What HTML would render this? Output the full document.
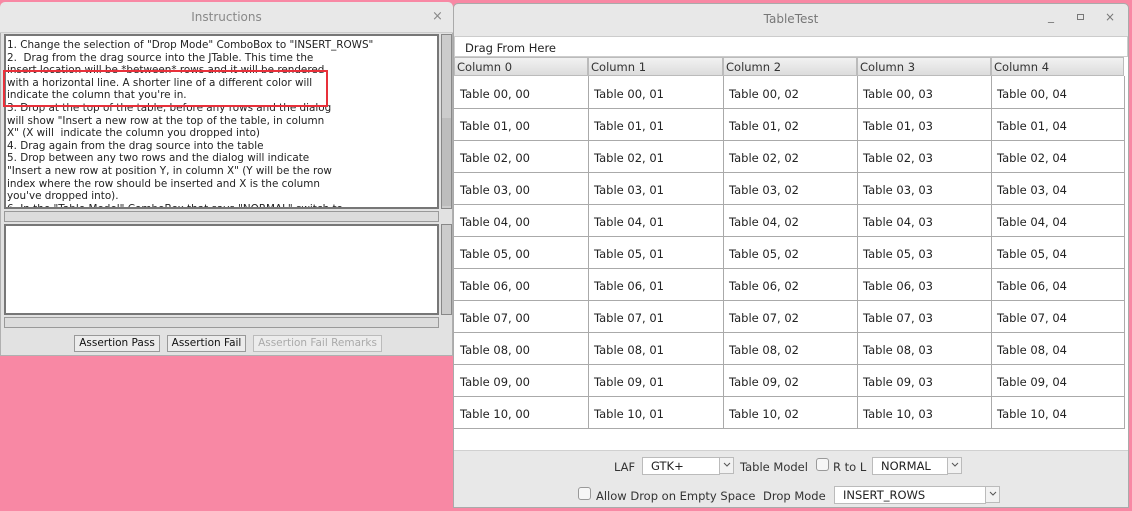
<!DOCTYPE html>
<html><head><meta charset="utf-8"><style>
*{margin:0;padding:0;box-sizing:border-box}
body{width:1132px;height:511px;background:#f888a4;position:relative;overflow:hidden;font-family:"DejaVu Sans","Liberation Sans",sans-serif}
.a{position:absolute}
.ta{font-size:10.4px;color:#222;line-height:12.6px;white-space:pre}
.btn{position:absolute;height:17px;border:1px solid #999;background:#ececec;font-size:10.5px;line-height:15px;text-align:center;color:#111}
.hs{position:absolute;height:11px;background:#dcdcdc;border:1px solid #999}
.cell{position:absolute;font-size:11.5px;color:#222}
.hd{position:absolute;top:57px;height:19px;background:linear-gradient(#f2f2f2,#dcdcdc);border:1px solid #bbb;font-size:11.5px;color:#333;line-height:18px;padding-left:2px}
.combo{position:absolute;background:#fff;border:1px solid #bbb;font-size:11.5px;color:#222;line-height:16px;padding-left:8px;height:18px}
.arr{position:absolute;width:15px;height:17px;border:1px solid #bbb;background:#f2f2f2}
.arr svg{position:absolute;left:3px;top:4px}
.cb{position:absolute;width:13px;height:13px;border:1px solid #999;border-radius:3px;background:#f6f6f6}
.lb{position:absolute;font-size:11.5px;color:#333}
</style></head><body>
<div class="a" style="left:0;top:2px;width:453px;height:354px;background:#e2e2e2;border:1px solid #b0b0b0;border-radius:5px 5px 0 0"></div>
<div class="a" style="left:0;top:2px;width:453px;height:31px;background:#e8e8e8;border-radius:5px 5px 0 0;border-bottom:1px solid #ccc"></div>
<div class="a" style="left:0;top:10px;width:453px;text-align:center;font-size:12px;color:#888">Instructions</div>
<div class="a" style="left:432px;top:9px;font-size:13px;color:#888">×</div>
<div class="a" style="left:4px;top:34px;width:435px;height:175px;background:#fff;border:2px solid #777;overflow:hidden">
<div class="ta" style="margin:3px 0 0 1px">1. Change the selection of "Drop Mode" ComboBox to "INSERT_ROWS"
2.  Drag from the drag source into the JTable. This time the
insert location will be *between* rows and it will be rendered
with a horizontal line. A shorter line of a different color will
indicate the column that you're in.
3. Drop at the top of the table, before any rows and the dialog
will show "Insert a new row at the top of the table, in column
X" (X will  indicate the column you dropped into)
4. Drag again from the drag source into the table
5. Drop between any two rows and the dialog will indicate
"Insert a new row at position Y, in column X" (Y will be the row
index where the row should be inserted and X is the column
you've dropped into).
6. In the "Table Model" ComboBox that says "NORMAL" switch to</div></div>
<div class="a" style="left:3px;top:70px;width:325px;height:37px;border:2px solid #e8303a"></div>
<div class="a" style="left:441px;top:34px;width:11px;height:175px;background:#ccc;border:1px solid #888"></div>
<div class="a" style="left:442px;top:118px;width:9px;height:88px;background:#bdbdbd"></div>
<div class="hs" style="left:4px;top:211px;width:435px"></div>
<div class="a" style="left:4px;top:224px;width:435px;height:91px;background:#fff;border:2px solid #777"></div>
<div class="a" style="left:441px;top:224px;width:11px;height:91px;background:#ccc;border:1px solid #888"></div>
<div class="hs" style="left:4px;top:317px;width:435px"></div>
<div class="btn" style="left:74px;top:335px;width:86px">Assertion Pass</div>
<div class="btn" style="left:167px;top:335px;width:79px">Assertion Fail</div>
<div class="btn" style="left:253px;top:335px;width:129px;color:#aaa;border-color:#bbb">Assertion Fail Remarks</div>

<div class="a" style="left:453px;top:3px;width:676px;height:505px;background:#e8e8e8;border:1px solid #aaa;border-radius:5px 5px 0 0"></div>
<div class="a" style="left:454px;top:12px;width:674px;text-align:center;font-size:12px;color:#777">TableTest</div>
<div class="a" style="left:1048px;top:9px;font-size:12px;color:#777">_</div>
<div class="a" style="left:1077px;top:14px;width:7px;height:6px;border:1px solid #777"></div>
<div class="a" style="left:1105px;top:10px;font-size:12px;color:#777">×</div>
<div class="a" style="left:454px;top:36px;width:674px;height:414px;background:#fff"></div>
<div class="a" style="left:454px;top:36px;width:674px;height:21px;border:1px solid #ccc;font-size:11.5px;color:#222;padding:4px 0 0 10px">Drag From Here</div>
<div class="hd" style="left:454px;width:134px">Column 0</div>
<div class="hd" style="left:588px;width:135px">Column 1</div>
<div class="hd" style="left:723px;width:134px">Column 2</div>
<div class="hd" style="left:857px;width:134px">Column 3</div>
<div class="hd" style="left:991px;width:133px">Column 4</div>
<svg class="a" style="left:0;top:0" width="1132" height="511">
<g stroke="#aaa" stroke-width="1">
<line x1="588.5" y1="76" x2="588.5" y2="429"/><line x1="723.5" y1="76" x2="723.5" y2="429"/><line x1="857.5" y1="76" x2="857.5" y2="429"/><line x1="991.5" y1="76" x2="991.5" y2="429"/><line x1="1124.5" y1="76" x2="1124.5" y2="429"/>
<line x1="454" y1="108.5" x2="1125" y2="108.5"/><line x1="454" y1="140.5" x2="1125" y2="140.5"/><line x1="454" y1="172.5" x2="1125" y2="172.5"/><line x1="454" y1="204.5" x2="1125" y2="204.5"/><line x1="454" y1="236.5" x2="1125" y2="236.5"/><line x1="454" y1="268.5" x2="1125" y2="268.5"/><line x1="454" y1="300.5" x2="1125" y2="300.5"/><line x1="454" y1="332.5" x2="1125" y2="332.5"/><line x1="454" y1="364.5" x2="1125" y2="364.5"/><line x1="454" y1="396.5" x2="1125" y2="396.5"/><line x1="454" y1="428.5" x2="1125" y2="428.5"/>
</g></svg>
<div id="cells"></div>
<script>
var xs=[460,594,729,863,997],h='';
for(var r=0;r<11;r++)for(var c=0;c<5;c++){var rr=(r<10?'0':'')+r;h+='<div class="cell" style="left:'+xs[c]+'px;top:'+(87+r*32)+'px">Table '+rr+', 0'+c+'</div>';}
document.getElementById('cells').innerHTML=h;
</script>
<div class="a" style="left:454px;top:450px;width:674px;height:57px;background:#e8e8e8;border-top:1px solid #d0d0d0"></div>
<div class="lb" style="left:614px;top:460px">LAF</div>
<div class="combo" style="left:642px;top:457px;width:78px">GTK+</div>
<div class="arr" style="left:719px;top:457px"><svg width="8" height="6"><path d="M1 1L4 4L7 1" stroke="#555" fill="none"/></svg></div>
<div class="lb" style="left:740px;top:460px">Table Model</div>
<div class="cb" style="left:816px;top:458px"></div>
<div class="lb" style="left:833px;top:460px">R to L</div>
<div class="combo" style="left:872px;top:457px;width:76px">NORMAL</div>
<div class="arr" style="left:947px;top:457px"><svg width="8" height="6"><path d="M1 1L4 4L7 1" stroke="#555" fill="none"/></svg></div>
<div class="cb" style="left:578px;top:487px"></div>
<div class="lb" style="left:596px;top:489px">Allow Drop on Empty Space</div>
<div class="lb" style="left:763px;top:489px">Drop Mode</div>
<div class="combo" style="left:834px;top:486px;width:152px">INSERT_ROWS</div>
<div class="arr" style="left:985px;top:486px"><svg width="8" height="6"><path d="M1 1L4 4L7 1" stroke="#555" fill="none"/></svg></div>
</body></html>
